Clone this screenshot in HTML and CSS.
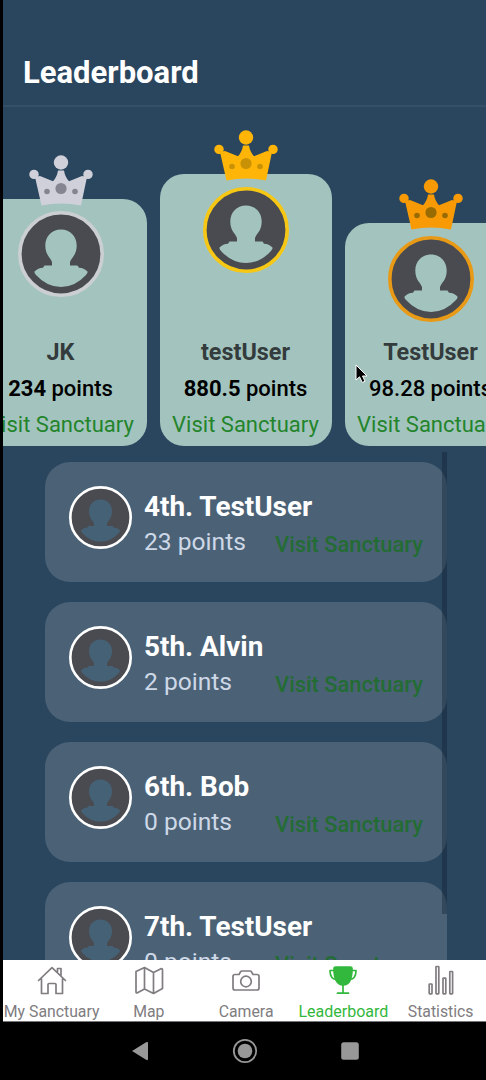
FILE: index.html
```
<!DOCTYPE html>
<html lang="en">
<head>
<meta charset="utf-8">
<title>Leaderboard</title>
<link rel="stylesheet" href="styles.css">
</head>
<body>
<svg class="defs" width="0" height="0">
  <symbol id="crown" viewBox="0 0 64 52">
    <circle cx="32" cy="8.500" r="7.2"/><circle cx="5" cy="20.400" r="4.7"/><circle cx="59" cy="20.400" r="4.7"/>
    <path d="M6 23 11 22 24 27.3Q28 23 29 16.5H35Q36 23 40 27.3L53 22 58 23 52 51.500Q32 47.500 12.500 51.500Z"/>
    <g class="gem"><circle cx="32" cy="34.500" r="5.600"/><circle cx="18" cy="37.500" r="2.800"/><circle cx="46" cy="37.500" r="2.800"/></g>
  </symbol>
  <symbol id="avatar" viewBox="0 0 86 86">
    <circle class="disc" cx="43" cy="43" r="41.200"/>
    <path class="person" d="M43 18.500C52.500 18.500 58.700 25.500 58.700 34.500C58.700 44 53.500 46.500 52 51V54.500H59.500L61 56.800Q66 57 69.500 60.500Q70 62 68 64Q57 76 43 76T18 64Q16 62 16.500 60.500Q20 57 25 56.800L26.500 54.500H34V51C32.500 46.500 27.300 44 27.300 34.500C27.300 25.500 33.500 18.500 43 18.500Z"/>
  </symbol>
</svg>
<div class="app">
  <header class="header"><h1>Leaderboard</h1></header>
  <main class="content">
    <section class="podium">
      <article class="card silver">
        <svg class="crown"><use href="#crown"/></svg>
        <svg class="avatar"><use href="#avatar"/></svg>
        <div class="info"><h2>JK</h2><p class="points"><b>234</b> points</p><a class="visit">Visit Sanctuary</a></div>
      </article>
      <article class="card gold">
        <svg class="crown"><use href="#crown"/></svg>
        <svg class="avatar"><use href="#avatar"/></svg>
        <div class="info"><h2>testUser</h2><p class="points"><b>880.5</b> points</p><a class="visit">Visit Sanctuary</a></div>
      </article>
      <article class="card bronze">
        <svg class="crown"><use href="#crown"/></svg>
        <svg class="avatar"><use href="#avatar"/></svg>
        <div class="info"><h2>TestUser</h2><p class="points">98.28 points</p><a class="visit">Visit Sanctuary</a></div>
      </article>
    </section>
    <section class="list">
      <article class="row"><svg class="avatar"><use href="#avatar"/></svg><div class="who"><h3>4th. TestUser</h3><p>23 points</p></div><a class="visit">Visit Sanctuary</a></article>
      <article class="row"><svg class="avatar"><use href="#avatar"/></svg><div class="who"><h3>5th. Alvin</h3><p>2 points</p></div><a class="visit">Visit Sanctuary</a></article>
      <article class="row"><svg class="avatar"><use href="#avatar"/></svg><div class="who"><h3>6th. Bob</h3><p>0 points</p></div><a class="visit">Visit Sanctuary</a></article>
      <article class="row last"><svg class="avatar"><use href="#avatar"/></svg><div class="who"><h3>7th. TestUser</h3><p>0 points</p></div><a class="visit">Visit Sanctuary</a></article>
      <div class="scrollbar"></div>
    </section>
  </main>
  <nav class="tabs">
    <a class="tab"><svg viewBox="0 0 32 32"><path d="M2.500 15.500 16 2.700 29.500 15.500M5.500 14V28.500H12V19.500Q12 18.500 13 18.500H19Q20 18.500 20 19.500V28.500H26.500V14M21.500 7V3.500H25V10.500"/></svg><span>My Sanctuary</span></a>
    <a class="tab"><svg viewBox="0 0 32 32"><path d="M3 6.500 11.500 2.500 20.500 7.500 28.500 3.500Q29.500 3.500 29.500 4.500V23.500L20.500 28.500 11.500 24 4 28Q3 28 3 27ZM11.500 2.500V24M20.500 7.500V28.500"/></svg><span>Map</span></a>
    <a class="tab"><svg viewBox="0 0 32 32"><path d="M5 9.500H9L10.500 6.800Q11 6 12 6H20Q21 6 21.500 6.800L23 9.500H27Q29 9.500 29 11.500V23Q29 25 27 25H5Q3 25 3 23V11.500Q3 9.500 5 9.500Z"/><circle cx="16" cy="16.500" r="5.300"/></svg><span>Camera</span></a>
    <a class="tab active"><svg viewBox="0 0 32 32"><path class="fill" d="M8.500 2H23.500Q25 2 25 3.500C25 14 22 20 16 20S7 14 7 3.500Q7 2 8.500 2Z"/><path d="M7.500 5.500H3C3 10.500 5 14.500 10 14.500M24.500 5.500H29C29 10.500 27 14.500 22 14.500M16 20V28M10.500 28.200H21.500"/></svg><span>Leaderboard</span></a>
    <a class="tab"><svg viewBox="0 0 32 32"><rect x="4.200" y="19" width="2.800" height="9.800" rx=".5"/><rect x="11" y="1.500" width="2.800" height="27.300" rx=".5"/><rect x="18" y="13.200" width="2.800" height="15.600" rx=".5"/><rect x="24.800" y="6.500" width="2.800" height="22.300" rx=".5"/></svg><span>Statistics</span></a>
  </nav>
  <footer class="system">
    <svg viewBox="0 0 24 24"><path d="M4 12 18.500 3Q20 2.500 20 4V20Q20 21.500 18.500 21Z"/></svg>
    <svg viewBox="0 0 24 24"><circle class="ring" cx="12" cy="12" r="11.200"/><circle cx="12" cy="12" r="7.300"/></svg>
    <svg viewBox="0 0 24 24"><rect x="3.200" y="3.200" width="17.600" height="17.600" rx="2.500"/></svg>
  </footer>
</div>
<svg class="cursor" viewBox="0 0 14 22"><path d="M1 1V16L4.500 12.800 7.300 18.500 10 17.200 7.500 12H12Z"/></svg>
</body>
</html>
```
FILE: styles.css
```
* { box-sizing: border-box; margin: 0; }
body { background: #000; font-family: Roboto, "Liberation Sans", sans-serif; height: 1080px; overflow: hidden; white-space: nowrap; }
.defs { display: block; position: absolute; }
svg { overflow: visible; flex: none; display: block; }
.app { height: 1080px; margin-left: 3px; overflow: hidden; display: flex; flex-direction: column; background: #2a465e; }
.header { height: 107px; padding: 55px 20px 0; border-bottom: 2px solid #354f66; flex: none; }
h1 { font-size: 31px; line-height: 36px; font-weight: 700; color: #fff; }
.content { height: 853px; flex: none; overflow: hidden; display: flex; flex-direction: column; }
.podium { height: 345px; margin-left: 2px; padding-bottom: 6px; display: flex; align-items: flex-end; justify-content: center; gap: 13px; flex: none; }
.card { width: 172px; height: 272px; flex: none; border-radius: 24px; background: #a3c4be; display: flex; flex-direction: column; align-items: center; }
.silver { height: 247.500px; --medal: #cfd0d9; --gem: #858591; --ring: #cccfd1; }
.gold { --medal: #ffb508; --gem: #c99206; --ring: #f7c715; }
.bronze { height: 223px; --medal: #f79a05; --gem: #986c02; --ring: #e89a16; }
.crown { width: 64px; height: 52px; margin-top: -45px; fill: var(--medal); }
.gem { fill: var(--gem); }
.avatar { width: 86px; height: 86px; margin-top: 5.500px; }
.disc { fill: #494b50; stroke: var(--ring); stroke-width: 3.600px; }
.person { fill: var(--person, #a3c4be); }
.info { margin-top: auto; padding-bottom: 3px; display: flex; flex-direction: column; align-items: center; }
h2 { font-size: 23.400px; line-height: 36px; margin-bottom: 1px; margin-top: -2px; font-weight: 700; color: #333b3c; }
.points { font-size: 22px; line-height: 36px; font-weight: 500; color: #000; }
.visit { font-size: 22px; line-height: 36px; color: #23842c; }
.list { position: relative; width: 402px; margin-left: 42px; padding-top: 9.500px; display: flex; flex-direction: column; gap: 20px; }
.row { height: 120px; flex: none; border-radius: 25px; background: #4b6276; display: flex; padding-left: 24px; --person: #456176; --ring: #fff; }
.row .avatar { width: 63px; height: 63px; margin-top: 24px; }
.who { width: 131px; margin: 27.500px 0 0 12px; }
h3 { font-size: 27.900px; line-height: 35px; font-weight: 700; color: #fff; }
.who p { font-size: 24.600px; line-height: 35px; color: #ced8e7; }
.row .visit { margin-top: 65.500px; color: #236c34; font-size: 21.900px; font-weight: 500; }
.last { border-radius: 25px 25px 0 0; }
.scrollbar { position: absolute; right: 0; top: 0; width: 5px; height: 462px; background: rgba(12, 25, 42, .35); }
.tabs { height: 61.500px; flex: none; background: #fff; border-bottom: 1px solid #77777b; display: grid; grid-template-columns: repeat(5, 97.250px); }
.tab { display: flex; flex-direction: column; align-items: center; color: #807c80; font-size: 15.800px; line-height: 20px; }
.tab svg { width: 32px; height: 32px; margin: 5px 0; fill: none; stroke: currentColor; stroke-width: 1.700px; stroke-linejoin: round; stroke-linecap: round; }
.tab.active { color: #32b83c; font-size: 16px; }
.tab .fill { fill: currentColor; }
.system { height: 58.500px; flex: none; background: #000; display: flex; justify-content: center; align-items: center; gap: 81px; padding-left: 1px; fill: #989898; }
.system svg { width: 24px; height: 24px; }
.system .ring { fill: none; stroke: #989898; stroke-width: 1.800px; }
.cursor { position: absolute; left: 355px; top: 364px; width: 14px; height: 22px; stroke: #fff; stroke-width: 1px; }
```
